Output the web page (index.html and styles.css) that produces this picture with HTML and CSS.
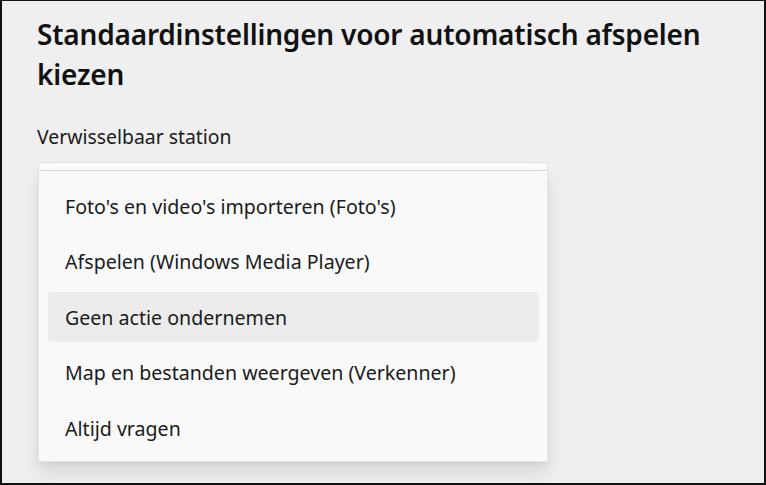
FILE: index.html
```html
<!DOCTYPE html>
<html lang="nl">
<head>
  <meta charset="UTF-8">
  <meta name="viewport" content="width=device-width, initial-scale=1.0">
  <title>Automatisch afspelen</title>
  <link rel="stylesheet" href="styles.css">
</head>
<body>
  <div class="frame">
    <h1 class="title">Standaardinstellingen voor automatisch afspelen kiezen</h1>

    <div class="label">Verwisselbaar station</div>

    <!-- uitgeklapte keuzelijst -->
    <div class="dropdown">
      <div class="dropdown-top"></div>
      <ul class="menu">
        <li class="menu-item">Foto's en video's importeren (Foto's)</li>
        <li class="menu-item">Afspelen (Windows Media Player)</li>
        <li class="menu-item selected">Geen actie ondernemen</li>
        <li class="menu-item">Map en bestanden weergeven (Verkenner)</li>
        <li class="menu-item">Altijd vragen</li>
      </ul>
    </div>
  </div>
</body>
</html>
```

FILE: styles.css
```css
html, body {
  margin: 0;
  padding: 0;
}
body {
  font-family: "Segoe UI", "Noto Sans", "Open Sans", sans-serif;
  color: #1b1b1b;
  background: #efefef;
}
.frame {
  box-sizing: border-box;
  width: 766px;
  height: 485px;
  border: 2px solid #111;
  border-top-width: 1px;
  background: #efefef;
  padding: 0 0 0 35px;
  overflow: hidden;
}
.title {
  margin: 13px 0 0;
  width: 680px;
  font-size: 28px;
  font-weight: 600;
  letter-spacing: -0.2px;
  line-height: 40px;
  color: #111;
}
.label {
  margin-top: 30px;
  font-size: 19.4px;
  line-height: 26px;
  color: #1b1b1b;
}
.dropdown {
  margin-top: 12px;
  margin-left: 1px;
  width: 510px;
}
.dropdown-top {
  height: 7px;
  background: #fbfbfb;
  border: 1px solid #e2e2e2;
  border-bottom-color: #dcdcdc;
}
.menu {
  list-style: none;
  margin: 0;
  padding: 10px 8px 8px 9px;
  display: flex;
  flex-direction: column;
  gap: 5.5px;
  background: #f9f9f9;
  border: 1px solid #e6e6e6;
  border-top: none;
  box-shadow: 0 10px 16px rgba(0, 0, 0, 0.1), 0 2px 4px rgba(0, 0, 0, 0.05);
}
.menu-item {
  height: 50px;
  padding-left: 17px;
  display: flex;
  align-items: center;
  font-size: 19.6px;
  border-radius: 4px;
  color: #1b1b1b;
}
.menu-item.selected {
  background: #ececec;
}
```
